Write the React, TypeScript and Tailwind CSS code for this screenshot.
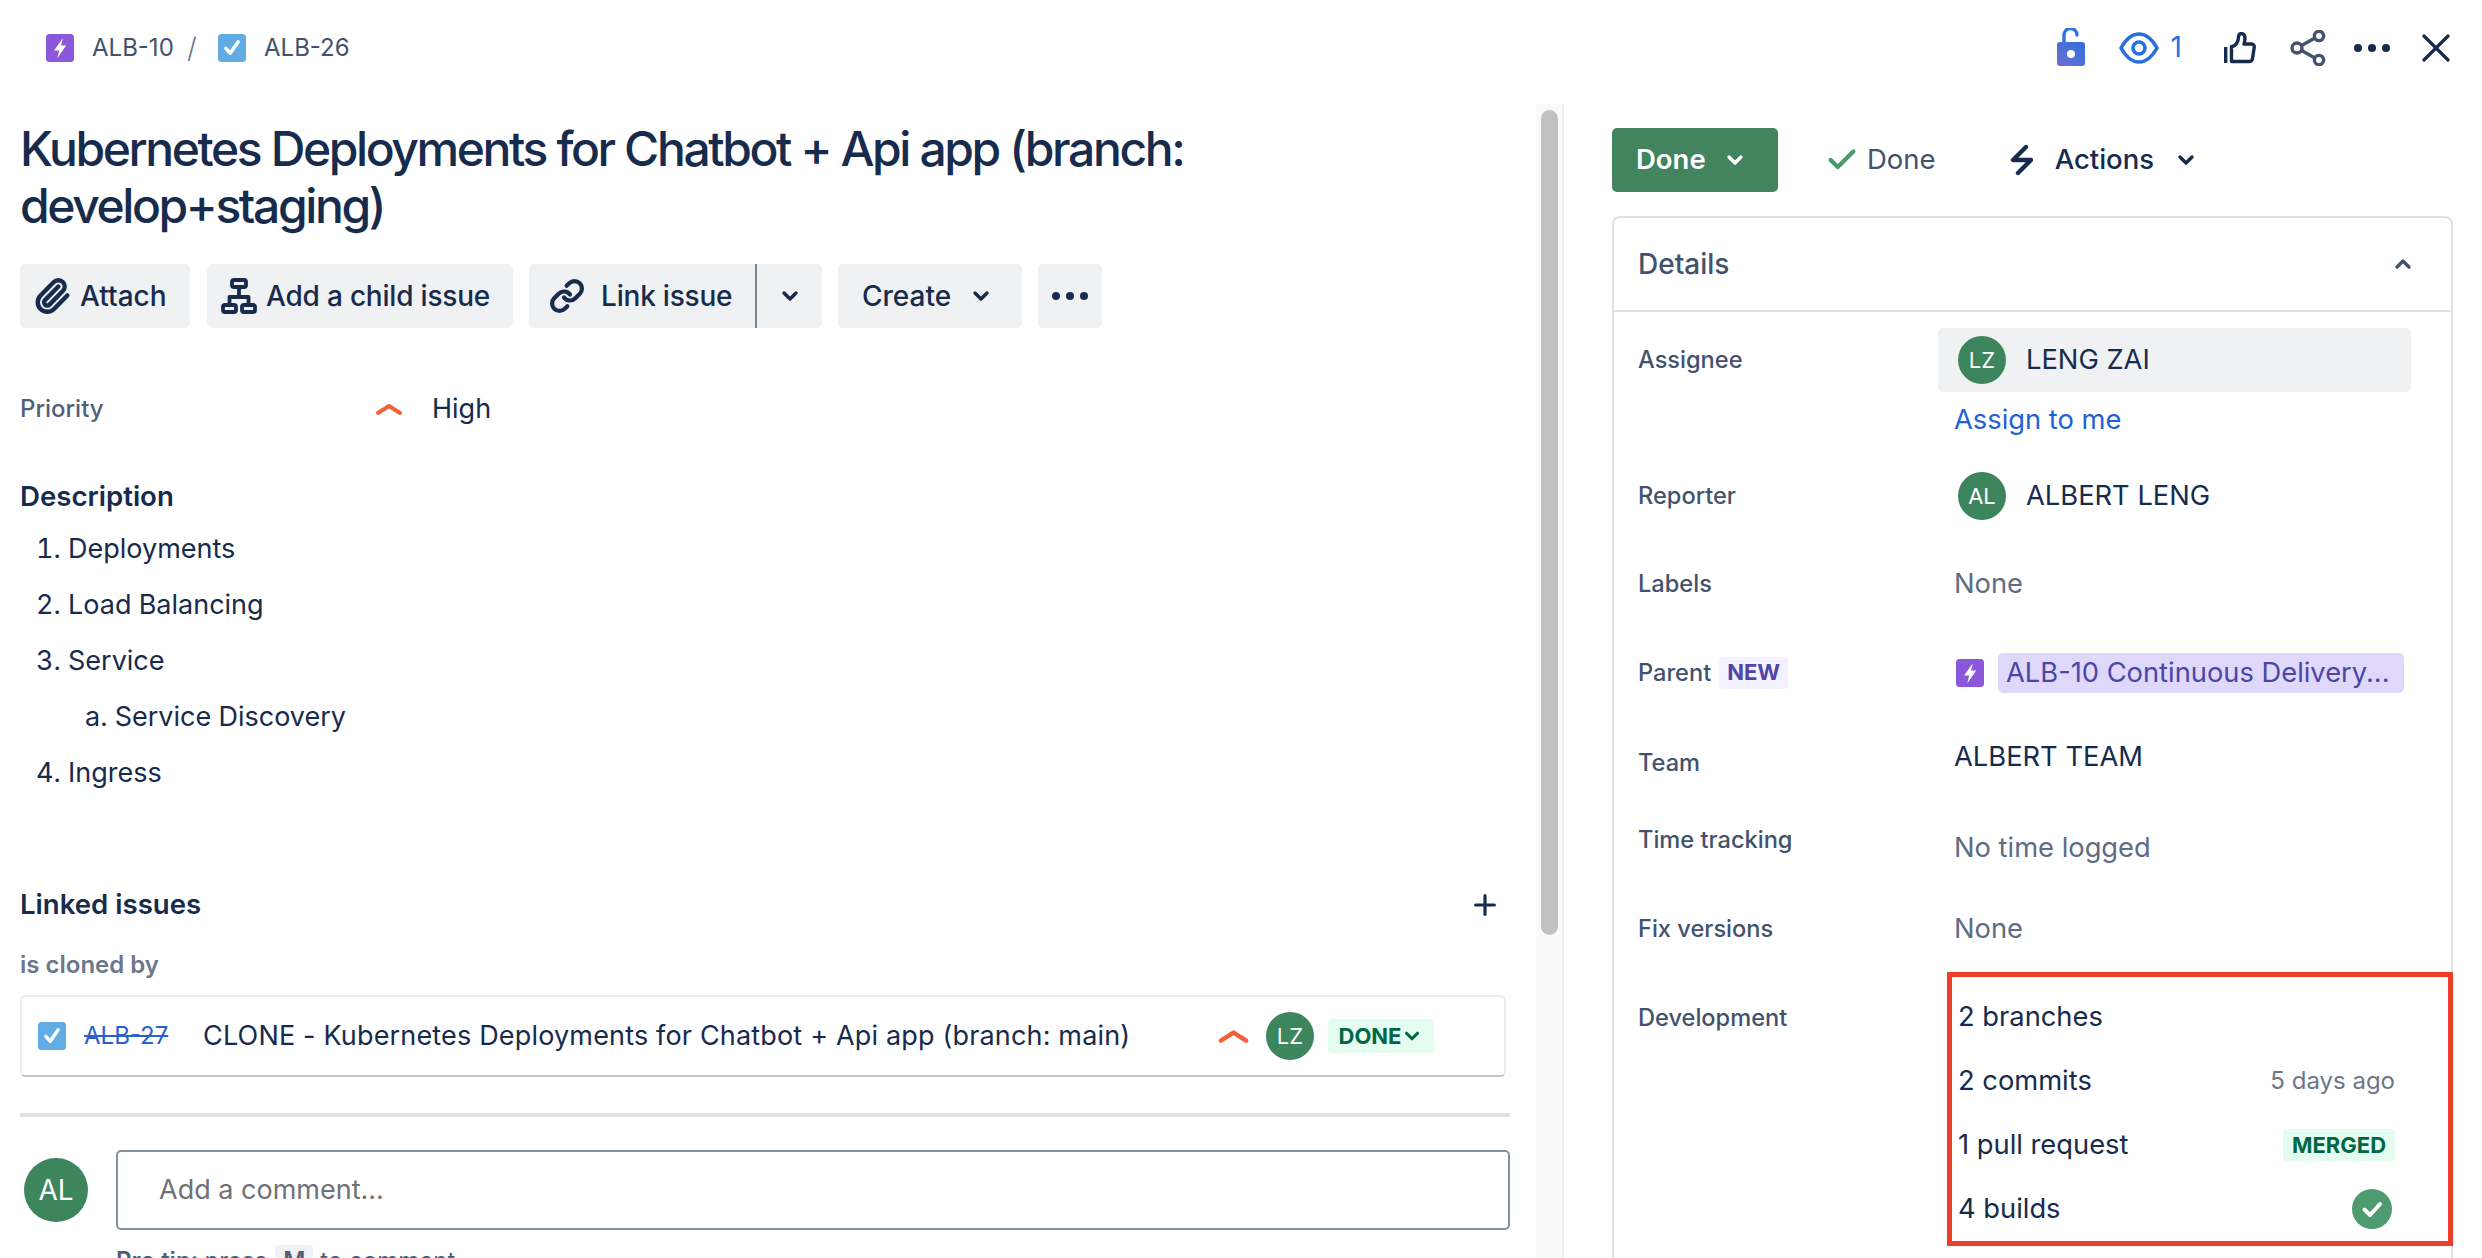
import React from 'react';
import { ChevronDown, ChevronUp, Check, Plus, Paperclip, Link } from 'lucide-react';

// Small square issue-type icons
const EpicIcon = ({ className }: { className: string }) => (
  <svg viewBox="0 0 16 16" className={className}>
    <rect width="16" height="16" rx="2" fill="#8b57db" />
    <path d="M9.6 2.4 4.6 9.4h2.9l-1 4.4 5-7.2H8.6z" fill="#fff" />
  </svg>
);

const TaskIcon = ({ className }: { className: string }) => (
  <svg viewBox="0 0 16 16" className={className}>
    <rect width="16" height="16" rx="2" fill="#62ace6" />
    <path d="M4.5 8.2 7 11l4.5-6.5" fill="none" stroke="#fff" strokeWidth="2" strokeLinecap="round" strokeLinejoin="round" />
  </svg>
);

const PriorityHigh = ({ className }: { className: string }) => (
  <svg viewBox="0 0 28 14" className={className}>
    <path d="M3 11 14 4l11 7" fill="none" stroke="#f1623b" strokeWidth="4" strokeLinecap="round" strokeLinejoin="round" />
  </svg>
);

const Avatar = ({ text, className }: { text: string; className: string }) => (
  <div className={`flex shrink-0 items-center justify-center rounded-full bg-[#3d855c] text-white ${className}`}>{text}</div>
);

const ToolButton = ({ children, className = '' }: { children: React.ReactNode; className?: string }) => (
  <div className={`flex h-[64px] items-center rounded-[5px] bg-[#f0f1f3] font-medium ${className}`}>{children}</div>
);

const Dots = ({ className }: { className: string }) => (
  <svg viewBox="0 0 36 8" className={className} fill="currentColor">
    <circle cx="4" cy="4" r="4" />
    <circle cx="18" cy="4" r="4" />
    <circle cx="32" cy="4" r="4" />
  </svg>
);

const TopBar = () => (
  <div className="flex h-[104px] items-start justify-between">
    <div className="ml-[46px] mt-[34px] flex h-[28px] items-center whitespace-nowrap text-[24px] text-[#42526e]">
      <EpicIcon className="h-[28px] w-[28px]" />
      <span className="ml-[18px] w-[83px]">ALB-10</span>
      <span className="ml-[12px] w-[31px] text-[28px] font-light text-[#6b778c]">/</span>
      <TaskIcon className="h-[28px] w-[28px]" />
      <span className="ml-[18px]">ALB-26</span>
    </div>
    <div className="mr-[32px] mt-[28px] flex items-start">
      <svg viewBox="0 0 28 38" className="h-[38px] w-[28px]">
        <defs>
          <linearGradient id="lockFill" x1="0" y1="1" x2="1" y2="0">
            <stop offset="0" stopColor="#6f6fd0" />
            <stop offset="1" stopColor="#2f6fe0" />
          </linearGradient>
        </defs>
        <path d="M7 14V7a6.5 6.5 0 0 1 13 0" fill="none" stroke="#2f72e4" strokeWidth="3.4" strokeLinecap="round" />
        <rect y="14" width="28" height="24" rx="3" fill="url(#lockFill)" />
        <circle cx="14" cy="26" r="4" fill="#fff" />
      </svg>
      <svg viewBox="0 0 40 32" className="ml-[34px] mt-[4px] h-[32px] w-[40px]" fill="none" stroke="#2a6fe0" strokeWidth="3.6">
        <path d="M2 16C7 7 13 2 20 2s13 5 18 14c-5 9-11 14-18 14S7 25 2 16z" />
        <circle cx="20" cy="16" r="6" />
      </svg>
      <span className="ml-[12px] mt-[1px] text-[28px] leading-[36px] text-[#2a6fe0]">1</span>
      <svg viewBox="0 0 32 32" className="ml-[42px] mt-[4px] h-[32px] w-[32px]" fill="none" stroke="#172b4d" strokeWidth="3.4" strokeLinejoin="round">
        <path d="M1.7 15v16" />
        <path d="M7.5 14.5c4 0 7-5 7-9.5 0-2 1-3.5 3-3.5s3.5 2 3.5 4.5-1 6-1 6h7.5c2 0 3 1.5 2.7 3.5l-1.7 11c-.3 2-1.7 3-3.5 3H7.5z" />
      </svg>
      <svg viewBox="0 0 36 36" className="ml-[34px] mt-[2px] h-[36px] w-[36px]" fill="none" stroke="#44526f" strokeWidth="3.4">
        <circle cx="7" cy="18" r="5" />
        <circle cx="29" cy="6" r="4.6" />
        <circle cx="29" cy="30" r="4.6" />
        <path d="m11.5 15.5 13.5-7.5M11.5 20.5 25 28" />
      </svg>
      <Dots className="ml-[28px] mt-[16px] h-[8px] w-[36px] text-[#172b4d]" />
      <svg viewBox="0 0 28 28" className="ml-[32px] mt-[6px] h-[28px] w-[28px]" fill="none" stroke="#172b4d" strokeWidth="3.2" strokeLinecap="round">
        <path d="m2 2 24 24M26 2 2 26" />
      </svg>
    </div>
  </div>
);

const LeftPane = () => (
  <div className="w-[1536px] shrink-0 pl-[20px] pr-[26px] pt-[16px] text-[#172b4d]">
    <h1 className="text-[48px] font-medium leading-[57px] tracking-[-2.4px]">
      Kubernetes Deployments for Chatbot + Api app (branch:
      <br />
      develop+staging)
    </h1>

    <div className="mt-[30px] flex text-[28px]">
      <ToolButton className="w-[170px] pl-[13px]">
        <Paperclip className="h-[38px] w-[38px]" strokeWidth={2.8} />
        <span className="ml-[9px]">Attach</span>
      </ToolButton>
      <ToolButton className="ml-[17px] w-[306px] pl-[14px]">
        <svg viewBox="0 0 36 36" className="h-[36px] w-[36px]" fill="none" stroke="#172b4d" strokeWidth="3.8" strokeLinejoin="round">
          <rect x="11" y="2" width="14" height="7" rx="2" />
          <rect x="2" y="27" width="13" height="7" rx="2" />
          <rect x="21" y="27" width="13" height="7" rx="2" />
          <path d="M18 9v10M8.5 27v-8h19v8" />
        </svg>
        <span className="ml-[9px] tracking-[-0.2px]">Add a child issue</span>
      </ToolButton>
      <ToolButton className="ml-[16px] w-[228px] rounded-r-none border-r-2 border-[#7a869a] pl-[20px]">
        <Link className="h-[36px] w-[36px]" strokeWidth={2.8} />
        <span className="ml-[16px] tracking-[-0.2px]">Link issue</span>
      </ToolButton>
      <ToolButton className="w-[65px] justify-center rounded-l-none">
        <ChevronDown className="h-[24px] w-[24px]" strokeWidth={3.4} />
      </ToolButton>
      <ToolButton className="ml-[16px] w-[184px] pl-[24px]">
        <span>Create</span>
        <ChevronDown className="ml-[18px] h-[24px] w-[24px]" strokeWidth={3.4} />
      </ToolButton>
      <ToolButton className="ml-[16px] w-[64px] justify-center">
        <Dots className="h-[8px] w-[36px]" />
      </ToolButton>
    </div>

    <div className="mt-[61px] flex h-[40px] items-center">
      <span className="w-[355px] text-[24px] font-medium text-[#505f79]">Priority</span>
      <PriorityHigh className="h-[14px] w-[28px]" />
      <span className="ml-[29px] text-[27px]">High</span>
    </div>

    <h2 className="mt-[49px] text-[27.6px] font-semibold leading-[36px]">Description</h2>
    <ol className="mt-[7px] text-[27px] leading-[56px] tabular-nums">
      <li className="pl-[16px]">1. Deployments</li>
      <li className="pl-[16px]">2. Load Balancing</li>
      <li className="pl-[16px]">3. Service</li>
      <li className="pl-[65px]">a. Service Discovery</li>
      <li className="pl-[16px]">4. Ingress</li>
    </ol>

    <div className="mt-[86px] flex h-[36px] items-center justify-between pr-[9px]">
      <h2 className="text-[27.6px] font-semibold">Linked issues</h2>
      <Plus className="h-[32px] w-[32px]" strokeWidth={2.4} />
    </div>
    <div className="mt-[27px] text-[24px] font-semibold leading-[30px] text-[#6b778c]">is cloned by</div>

    <div className="mr-[4px] mt-[15px] flex h-[82px] items-center rounded-[5px] border-2 border-[#ebecf0] border-b-[#c1c7d0] pl-[16px]">
      <TaskIcon className="h-[28px] w-[28px]" />
      <span className="ml-[18px] w-[87px] whitespace-nowrap text-[24px] text-[#2a5fd0] line-through">ALB-27</span>
      <span className="ml-[32px] w-[1014px] text-[27px] tracking-[0.17px]">CLONE - Kubernetes Deployments for Chatbot + Api app (branch: main)</span>
      <PriorityHigh className="h-[16px] w-[33px]" />
      <Avatar text="LZ" className="ml-[16px] h-[48px] w-[48px] text-[22px]" />
      <div className="ml-[14px] flex h-[34px] w-[106px] items-center justify-center rounded-[4px] bg-[#e3fcef] text-[22px] font-bold text-[#006644]">
        DONE
        <ChevronDown className="h-[22px] w-[22px]" strokeWidth={3.4} />
      </div>
    </div>

    <div className="mt-[36px] h-[4px] bg-[#dfe1e6]" />

    <div className="mt-[33px] flex items-center">
      <Avatar text="AL" className="ml-[4px] h-[64px] w-[64px] text-[28px]" />
      <div className="ml-[28px] flex h-[80px] flex-1 items-center rounded-[5px] border-2 border-[#858fa3] pl-[41px] text-[27px] text-[#6f7176]">
        Add a comment...
      </div>
    </div>
    <div className="ml-[96px] mt-[15px] flex items-center text-[24px] leading-[32px] text-[#505f79]">
      <span className="font-semibold">Pro tip:</span>
      <span className="ml-[6px]">press</span>
      <span className="ml-[8px] rounded-[4px] bg-[#f0f1f3] px-[8px] font-semibold">M</span>
      <span className="ml-[7px]">to comment</span>
    </div>
  </div>
);

const Label = ({ children, className = '' }: { children: React.ReactNode; className?: string }) => (
  <div className={`w-[316px] shrink-0 text-[23.6px] font-medium text-[#42526e] ${className}`}>{children}</div>
);

const DevRow = ({ label, right }: { label: string; right?: React.ReactNode }) => (
  <div className="flex h-[40px] items-center justify-between text-[#172b4d]">
    <span>{label}</span>
    {right}
  </div>
);

const RightPane = () => (
  <div className="min-w-0 flex-1 pl-[48px] pr-[29px] pt-[24px]">
    <div className="flex h-[64px] items-center text-[27.5px]">
      <div className="flex h-[64px] w-[166px] items-center rounded-[5px] bg-[#41845d] pl-[24px] font-semibold text-white">
        Done
        <ChevronDown className="ml-[17px] h-[24px] w-[24px]" strokeWidth={3.4} />
      </div>
      <Check className="ml-[47px] h-[34px] w-[34px] text-[#4a9a6b]" strokeWidth={3} />
      <span className="ml-[8px] text-[#42526e]">Done</span>
      <svg viewBox="0 0 24 32" className="ml-[74px] h-[32px] w-[24px]" fill="none" stroke="#172b4d" strokeWidth="4.4" strokeLinecap="round" strokeLinejoin="round">
        <path d="M16 3 3 16h18L8 29" />
      </svg>
      <span className="ml-[21px] font-medium text-[#172b4d]">Actions</span>
      <ChevronDown className="ml-[20px] h-[24px] w-[24px] text-[#172b4d]" strokeWidth={3.4} />
    </div>

    <div className="mt-[24px] rounded-t-[8px] border-2 border-b-0 border-[#dfe1e6]">
      <div className="flex h-[94px] items-center justify-between border-b-2 border-[#dfe1e6] pl-[24px] pr-[36px]">
        <span className="text-[28px] font-medium text-[#42526e]">Details</span>
        <ChevronUp className="h-[24px] w-[24px] text-[#42526e]" strokeWidth={3.4} />
      </div>

      <div className="h-[950px] pl-[24px] pt-[16px] text-[27.3px] text-[#172b4d]">
        <div className="flex">
          <Label className="leading-[64px]">Assignee</Label>
          <div className="flex-1">
            <div className="-ml-[16px] flex h-[64px] w-[473px] items-center rounded-[5px] bg-[#f0f1f3] pl-[20px]">
              <Avatar text="LZ" className="h-[48px] w-[48px] text-[22px]" />
              <span className="ml-[20px]">LENG ZAI</span>
            </div>
            <div className="mt-[8px] leading-[40px] text-[#1d62d8]">Assign to me</div>
          </div>
        </div>

        <div className="mt-[32px] flex items-center">
          <Label>Reporter</Label>
          <div className="ml-[4px] flex items-center">
            <Avatar text="AL" className="h-[48px] w-[48px] text-[22px]" />
            <span className="ml-[20px]">ALBERT LENG</span>
          </div>
        </div>

        <div className="mt-[44px] flex h-[40px] items-center">
          <Label>Labels</Label>
          <span className="text-[#5e6c84]">None</span>
        </div>

        <div className="mt-[49px] flex h-[40px] items-center">
          <Label className="flex items-center">
            Parent
            <span className="ml-[8px] flex h-[32px] w-[69px] items-center justify-center rounded-[4px] bg-[#f3f0ff] text-[22px] font-bold text-[#5243aa]">NEW</span>
          </Label>
          <EpicIcon className="ml-[2px] h-[28px] w-[28px]" />
          <div className="ml-[14px] flex h-[40px] w-[406px] items-center rounded-[5px] bg-[#dfd8fb] pl-[8px] text-[#4b46a6]">
            ALB-10 Continuous Delivery...
          </div>
        </div>

        <div className="mt-[44px] flex h-[40px] items-start">
          <Label className="pt-[8px]">Team</Label>
          <span className="leading-[40px]">ALBERT TEAM</span>
        </div>

        <div className="mt-[51px] flex h-[40px] items-start">
          <Label className="-mt-[6px]">Time tracking</Label>
          <span className="leading-[40px] text-[#5e6c84]">No time logged</span>
        </div>

        <div className="mt-[41px] flex h-[40px] items-center">
          <Label>Fix versions</Label>
          <span className="text-[#5e6c84]">None</span>
        </div>

        <div className="mt-[23px] flex">
          <Label className="pt-[28px]">Development</Label>
          <div className="-ml-[7px] flex h-[274px] w-[506px] shrink-0 flex-col gap-[24px] border-[5px] border-[#ee4028] pl-[6px] pr-[53px] pt-[20px]">
            <DevRow label="2 branches" />
            <DevRow label="2 commits" right={<span className="text-[24px] text-[#6b778c]">5 days ago</span>} />
            <DevRow
              label="1 pull request"
              right={<span className="flex h-[32px] w-[112px] items-center justify-center rounded-[4px] bg-[#e3fcef] text-[22px] font-bold text-[#006644]">MERGED</span>}
            />
            <DevRow
              label="4 builds"
              right={
                <svg viewBox="0 0 40 40" className="mr-[3px] h-[40px] w-[40px]">
                  <circle cx="20" cy="20" r="20" fill="#4e9b6f" />
                  <path d="m12.5 20.5 5.5 5.5 10-11" fill="none" stroke="#fff" strokeWidth="4" strokeLinecap="round" strokeLinejoin="round" />
                </svg>
              }
            />
          </div>
        </div>
      </div>
    </div>
  </div>
);

export default function App() {
  return (
    <div className="h-[1258px] w-[2482px] overflow-hidden bg-white font-['Inter',sans-serif]">
      <TopBar />
      <div className="flex h-[1154px]">
        <LeftPane />
        {/* scrollbar */}
        <div className="w-[28px] shrink-0 border-r-2 border-[#eeeeee] bg-[#fafafa] pl-[5px] pt-[6px]">
          <div className="h-[825px] w-[17px] rounded-full bg-[#c1c1c1]" />
        </div>
        <RightPane />
      </div>
    </div>
  );
}
